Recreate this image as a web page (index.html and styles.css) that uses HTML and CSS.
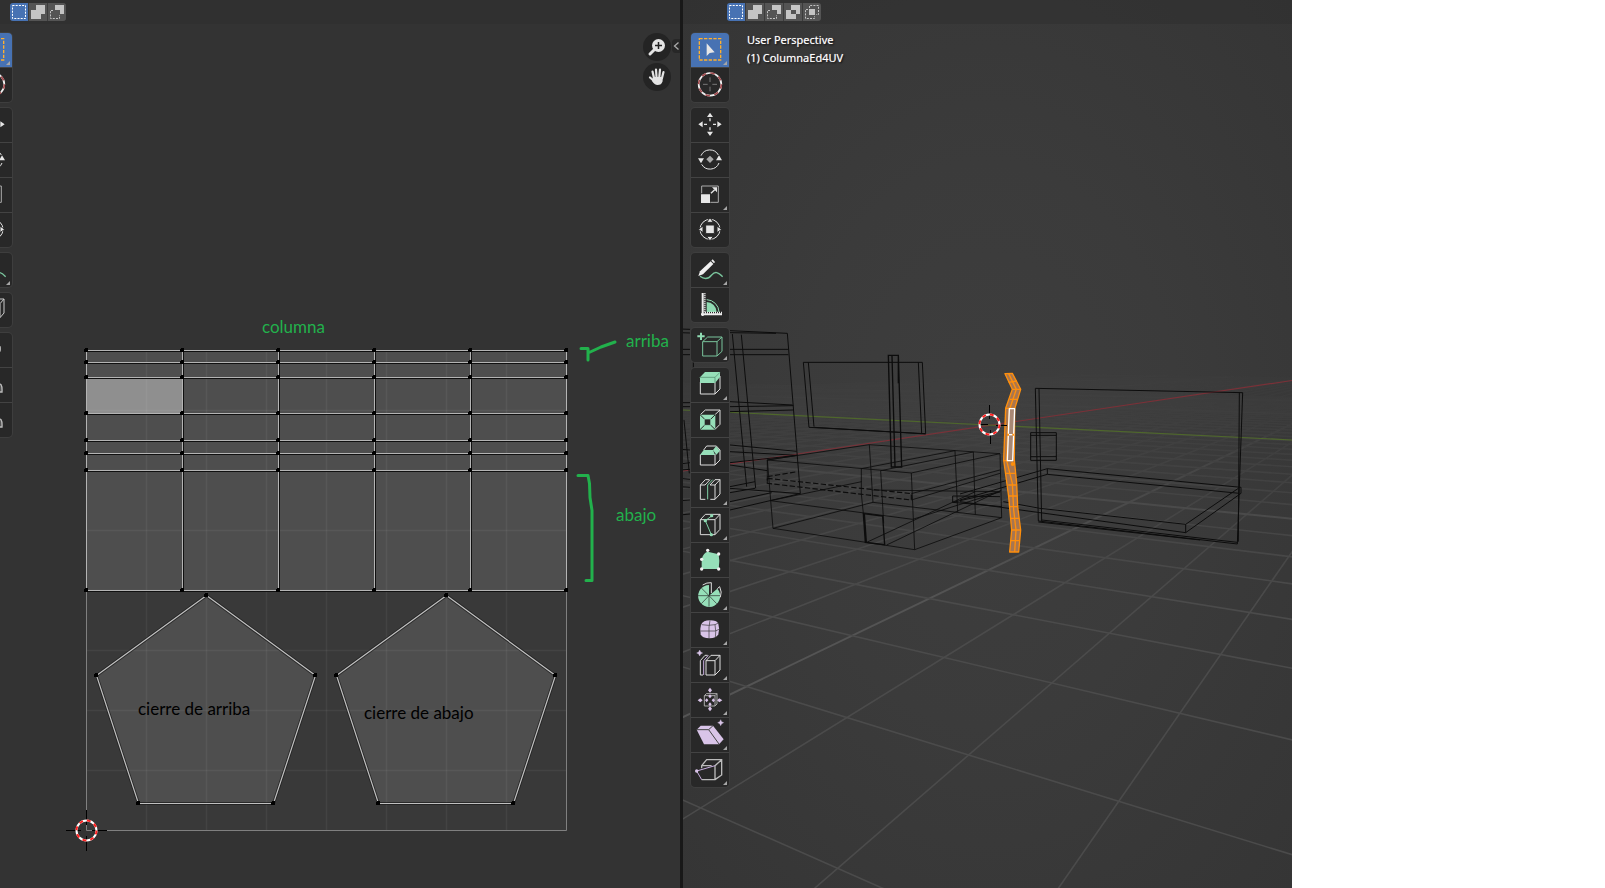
FILE: index.html
```html
<!DOCTYPE html>
<html lang="es">
<head>
<meta charset="utf-8">
<title>ColumnaEd4UV</title>
<link rel="stylesheet" href="styles.css">
</head>
<body>
<svg class="sprite" aria-hidden="true">
  <symbol id="m-set" viewBox="0 0 18 18"><rect x="2.5" y="2.5" width="13" height="13" fill="none" stroke="#fff" stroke-dasharray="2 1.2"/></symbol>
  <symbol id="m-add" viewBox="0 0 18 18"><path d="M7 2h9v9h-4v5H2V7h5z" fill="#c4c4c4"/></symbol>
  <symbol id="m-sub" viewBox="0 0 18 18"><path d="M7 2h9v9h-4V7H7z" fill="#c4c4c4"/><path d="M5 7.500H2.500v8h9V12" fill="none" stroke="#c4c4c4" stroke-dasharray="2 1.200"/></symbol>
  <symbol id="m-inv" viewBox="0 0 18 18"><path fill-rule="evenodd" d="M7 2h9v9h-4v5H2V7h5zM7 7v4h5V7z" fill="#c4c4c4"/></symbol>
  <symbol id="m-int" viewBox="0 0 18 18"><path d="M6 6h6v6H6z" fill="#c4c4c4"/><path d="M6.500 5V2.500h9v9H13M5 6.500H2.500v9h9V13" fill="none" stroke="#c4c4c4" stroke-dasharray="2 1.200"/></symbol>

  <symbol id="t-select" viewBox="0 0 114 102"><rect x="25" y="17" width="64" height="64" fill="none" stroke="#ffb02e" stroke-width="4" stroke-dasharray="10 4"/><path d="M47 31v38l9-9 15-2z" fill="#e6e6e6"/></symbol>
  <symbol id="t-cursor" viewBox="0 0 114 102"><g fill="none" stroke-width="5"><circle cx="57" cy="49" r="34" stroke="#f0f0f0"/><circle cx="57" cy="49" r="34" stroke="#a24a4e" stroke-dasharray="13.350 13.350"/><path d="M36 49h14M64 49h14M57 28v14M57 56v14" stroke="#777" stroke-width="3"/></g></symbol>
  <symbol id="t-move" viewBox="0 0 114 102"><path d="M57 14l9 13H48zM57 84l9-13H48zM22 49l13-9v18zM92 49l-13-9v18z" fill="#e6e6e6"/><path d="M57 31v9M57 58v9M39 49h9M66 49h9" stroke="#e6e6e6" stroke-width="4"/></symbol>
  <symbol id="t-rotate" viewBox="0 0 114 102"><path d="M30 38a29 29 0 0 1 52-2M84 60a29 29 0 0 1-52 4" fill="none" stroke="#e6e6e6" stroke-width="3"/><path d="M21 46h18l-9 15zM75 52h18l-9-15z" fill="#e6e6e6"/><path d="M57 38l11 11-11 11-11-11z" fill="#aaa"/></symbol>
  <symbol id="t-scale" viewBox="0 0 114 102"><path d="M32 46V24h50v49H58" fill="none" stroke="#aaa" stroke-width="3"/><path d="M30 49h27v26H30zM78 28v15L63 28z" fill="#e6e6e6"/><path d="M60 46l11-11" stroke="#e6e6e6" stroke-width="4"/></symbol>
  <symbol id="t-transform" viewBox="0 0 114 102"><circle cx="57" cy="49" r="30" fill="none" stroke="#e6e6e6" stroke-width="3"/><g fill="#e6e6e6" stroke="#282828" stroke-width="3"><path d="M57 14l10 14H47zM57 84l10-14H47zM22 49l14-10v20zM92 49L78 39v20z"/><path d="M44 36h26v26H44z"/></g></symbol>
  <symbol id="t-annotate" viewBox="0 0 114 102"><path d="M27 70c12 9 24 10 35-4 10-12 19-9 33 5" fill="none" stroke="#79c49c" stroke-width="4"/><path d="M22 69l5-14 32-30 8 8-31 31z" fill="#f0f0f0"/><path d="M61 23l4-4 7 8-3 4z" fill="#f0f0f0"/></symbol>
  <symbol id="t-measure" viewBox="0 0 114 102"><path d="M47 72V42a31 31 0 0 1 30 30z" fill="#8fdab2"/><path d="M47 35a38 38 0 0 1 37 37" fill="none" stroke="#8fdab2" stroke-width="3"/><path d="M35 15v69M30 79h63" stroke="#eee" stroke-width="6"/><path d="M41 16v60M42 74h51" stroke="#eee" stroke-width="6" stroke-dasharray="3 3"/></symbol>
  <symbol id="t-addcube" viewBox="0 0 114 102"><g fill="none" stroke="#79c49c" stroke-width="3"><path d="M35 41h43v43H35zM35 41l15-14h43L78 41M93 27v43L78 84"/></g><path d="M30 14v22M19 25h22" stroke="#8fdab2" stroke-width="6"/></symbol>
  <symbol id="t-extrude" viewBox="0 0 114 102"><path d="M28 42v36h44V42M72 78l15-15V24" fill="none" stroke="#ddd" stroke-width="3"/><path d="M27 28l15-16h45v15L72 45H27z" fill="#96dfb9"/><path d="M27 28h45v16M72 28l15-15" fill="none" stroke="#4c8467" stroke-width="2"/></symbol>
  <symbol id="t-inset" viewBox="0 0 114 102"><path d="M28 35l15-14h44L72 35M87 21v43L72 79" fill="none" stroke="#ddd" stroke-width="3"/><path d="M27 35h46v45H27z" fill="#96dfb9"/><path d="M27 35l46 45M73 35L27 80" stroke="#282828" stroke-width="3"/><path d="M40 48h19v19H40z" fill="#282828" stroke="#96dfb9" stroke-width="2"/></symbol>
  <symbol id="t-bevel" viewBox="0 0 114 102"><path d="M28 50v31h44V48M72 81l15-15V36M38 36l9-12h29l11 12" fill="none" stroke="#ddd" stroke-width="3"/><path d="M27 51l11-15h28l6 15zM66 36l9-11 12 13-11 12z" fill="#96dfb9"/></symbol>
  <symbol id="t-loopcut" viewBox="0 0 114 102"><g fill="none" stroke-width="3"><path d="M43 79H28V36h14l15-16M28 36l15-16h12M58 79h14V36H57l15-16h15v43L72 79M72 36l15-16" stroke="#ddd"/><path d="M50 79V36l15-16" stroke="#7fd0a5"/></g></symbol>
  <symbol id="t-knife" viewBox="0 0 114 102"><path d="M28 35h44v45H28zM28 35l15-16h44L72 35M87 19v45L72 80" fill="none" stroke="#ddd" stroke-width="3"/><path d="M62 24L43 38l18 42" fill="none" stroke="#7fd0a5" stroke-width="3"/><g fill="#8fdab2"><circle cx="62" cy="23" r="5"/><circle cx="43" cy="38" r="5"/><circle cx="61" cy="80" r="5"/></g></symbol>
  <symbol id="t-poly" viewBox="0 0 114 102"><path d="M32 48q6-20 18-22l33 8 2 20-2 24H32z" fill="#96dfb9"/><g fill="#f0f0f0"><circle cx="32" cy="49" r="5"/><circle cx="50" cy="22" r="5"/><circle cx="83" cy="33" r="5"/><circle cx="83" cy="78" r="5"/><circle cx="32" cy="78" r="5"/></g></symbol>
  <symbol id="t-spin" viewBox="0 0 114 102"><path d="M54 53V21a33 33 0 1 0 25 11z" fill="#96dfb9"/><path d="M54 53v33M54 53H21M54 53h33M54 53L31 30M54 53L31 77M54 53l23 24" stroke="#282828" stroke-width="2"/><path d="M35 21q12-8 26-7v31M79 32l7-6q8 16 2 32" fill="none" stroke="#ddd" stroke-width="3"/></symbol>
  <symbol id="t-smooth" viewBox="0 0 114 102"><path d="M30 35q6-13 27-13 20 0 25 10 5 16 0 32-6 12-26 12-23 0-27-12-3-16 1-29z" fill="#d9c4e8"/><path d="M29 54h44l11-5M54 76V42l3-20M32 35q20 4 40 0l10-5M73 75q3-20-1-40" fill="none" stroke="#333" stroke-width="2"/></symbol>
  <symbol id="t-slide" viewBox="0 0 114 102"><g fill="none" stroke-width="3"><path d="M36 81h-8V38l14-16h8M45 81h27V38H45zM45 38l15-16h27L72 38M87 22v44L72 81" stroke="#ddd"/><path d="M38 81V38l14-16" stroke="#c9aee0"/></g><path d="M26 6l3 6 6 3-6 3-3 6-3-6-6-3 6-3z" fill="#d9c4e8" stroke="#d9c4e8"/></symbol>
  <symbol id="t-fatten" viewBox="0 0 114 102"><path d="M40 38h32v31H40zM40 38l6-6h32v31l-6 6M72 38l6-6" fill="none" stroke="#aaa" stroke-width="3"/><path d="M57 14l6 8-6 7-6-7zM57 70l6 7-6 8-6-8zM20 52l8-6 7 6-7 6zM78 52l7-6 9 6-9 6z" fill="#d9c4e8"/><path d="M57 34l5 6-5 6-5-6zM57 58l5 6-5 6-5-6zM47 46l5 6-5 6-5-6zM67 46l5 6-5 6-5-6z" fill="#d9c4e8"/></symbol>
  <symbol id="t-shear" viewBox="0 0 114 102"><path d="M17 35l12-12h37l32 41-14 15H39z" fill="#d9c4e8"/><path d="M17 35h36l13-12M53 35l31 43" fill="none" stroke="#444" stroke-width="3"/><path d="M89 5l3 6 6 3-6 3-3 6-3-6-6-3 6-3z" fill="#d9c4e8" stroke="#d9c4e8"/></symbol>
  <symbol id="t-rip" viewBox="0 0 114 102"><path d="M72 38v42H32M32 46v-8l15-18h45v46L72 80M72 38l20-18M32 38h30" fill="none" stroke="#bbb" stroke-width="4"/><path d="M72 38L17 54l15 26" fill="none" stroke="#c9aee0" stroke-width="3"/><circle cx="17" cy="54" r="5" fill="#d9c4e8"/></symbol>
  <symbol id="t-ripuv" viewBox="0 0 114 102"><path d="M64 26l8-8h18v42L78 74M78 32l12-14M78 32v42" fill="none" stroke="#ccc" stroke-width="3"/></symbol>
  <symbol id="t-grab" viewBox="0 0 114 102"><rect x="50" y="36" width="31" height="22" rx="8" fill="#aaa"/></symbol>
  <symbol id="t-relax" viewBox="0 0 114 102"><path d="M60 50q18-4 21 0 4 6 3 22H60z" fill="#555" stroke="#bbb" stroke-width="4"/></symbol>
</svg>

<main class="app">
  <section class="pane pane-uv" aria-label="UV Editor">
    <svg class="canvas" role="img" aria-label="UV layout">
      <rect x="86" y="350" width="480" height="480" fill="#393939"/>
      <rect x="86" y="350" width="480" height="240" fill="#4e4e4e"/>
      <rect x="86" y="377" width="96" height="36" fill="#8f8f8f"/>
      <g fill="#4e4e4e">
        <path d="M206.500 595L315.500 675 274 803.500H138.500L96.500 675z"/>
        <path d="M446.500 595L555.500 675 514 803.500H378.500L336.500 675z"/>
      </g>
      <g id="uv-grid" stroke="#fff" stroke-opacity=".05" stroke-width="1.500"></g>
      <path d="M86.500 590v240.500h480V590" fill="none" stroke="#808080"/>
      <g id="uv-mesh"></g>
      <g class="cursor-mark">
        <path d="M66 830.500h15M92 830.500h15M86.500 810v15M86.500 836v15" stroke="#000"/>
        <circle cx="86.500" cy="830.500" r="10" class="ring-white"/>
        <circle cx="86.500" cy="830.500" r="10" class="ring-red"/>
      </g>
      <g fill="none" stroke="#22b14c" stroke-width="3" stroke-linejoin="round" stroke-linecap="round">
        <path d="M581 348.500h7V360M588 353l13-6 14-5"/>
        <path d="M578 475.500h10l1.500 8 .5 14 2 13v70h-6"/>
      </g>
      <g class="note">
        <text x="262" y="333">columna</text>
        <text x="626" y="347">arriba</text>
        <text x="616" y="521">abajo</text>
      </g>
      <g class="note note-dark">
        <text x="138" y="715">cierre de arriba</text>
        <text x="364" y="719">cierre de abajo</text>
      </g>
    </svg>
    <header class="bar">
      <div class="modes">
        <button class="mode on" aria-label="Set"><svg><use href="#m-set"/></svg></button>
        <button class="mode" aria-label="Extend"><svg><use href="#m-add"/></svg></button>
        <button class="mode" aria-label="Subtract"><svg><use href="#m-sub"/></svg></button>
      </div>
    </header>
    <div class="body">
      <nav class="tools tools-cut" aria-label="UV tools">
        <div class="group">
          <button class="tool on more" aria-label="Select Box"><svg><use href="#t-select"/></svg></button>
          <button class="tool" aria-label="Cursor"><svg><use href="#t-cursor"/></svg></button>
        </div>
        <div class="group">
          <button class="tool" aria-label="Move"><svg><use href="#t-move"/></svg></button>
          <button class="tool" aria-label="Rotate"><svg><use href="#t-rotate"/></svg></button>
          <button class="tool" aria-label="Scale"><svg><use href="#t-scale"/></svg></button>
          <button class="tool" aria-label="Transform"><svg><use href="#t-transform"/></svg></button>
        </div>
        <div class="group">
          <button class="tool more" aria-label="Annotate"><svg><use href="#t-annotate"/></svg></button>
        </div>
        <div class="group">
          <button class="tool" aria-label="Rip Region"><svg><use href="#t-ripuv"/></svg></button>
        </div>
        <div class="group">
          <button class="tool" aria-label="Grab"><svg><use href="#t-grab"/></svg></button>
          <button class="tool" aria-label="Relax"><svg><use href="#t-relax"/></svg></button>
          <button class="tool" aria-label="Pinch"><svg><use href="#t-relax"/></svg></button>
        </div>
      </nav>
      <div class="gizmos">
        <button class="gizmo" aria-label="Zoom"><svg viewBox="0 0 28 28"><circle cx="15.500" cy="12.500" r="6.500" fill="#e4e4e4"/><path d="M11 17l-4 4" stroke="#e4e4e4" stroke-width="3" stroke-linecap="round"/><path d="M15.500 9v7M12 12.500h7" stroke="#222" stroke-width="1.500"/></svg></button>
        <button class="gizmo" aria-label="Pan"><svg viewBox="0 0 28 28"><g stroke="#e4e4e4" stroke-width="2.200" stroke-linecap="round" fill="none"><path d="M11 15L9.500 8.500M13.500 14L13 6.500M16.300 14l.7-7.300M19 15l1.500-6M11 18l-4-3.500"/></g><path d="M10 14h10l-.5 4.500q-1 3.500-5 3.500-3 0-5.500-4z" fill="#e4e4e4"/></svg></button>
      </div>
      <button class="side-tab" aria-label="Sidebar"><svg viewBox="0 0 8 14"><path d="M6.500 3.500l-4 3.500 4 3.500" fill="none" stroke="#aaa" stroke-width="1.300"/></svg></button>
    </div>
  </section>

  <section class="pane pane-3d" aria-label="3D Viewport">
    <svg class="canvas" role="img" aria-label="Wireframe scene">
      <defs>
        <linearGradient id="fade" gradientUnits="userSpaceOnUse" x1="0" y1="350" x2="0" y2="600">
          <stop offset="0" stop-color="#fff" stop-opacity="0"/><stop offset=".25" stop-color="#fff" stop-opacity=".2"/><stop offset=".6" stop-color="#fff" stop-opacity=".6"/><stop offset="1" stop-color="#fff"/>
        </linearGradient>
        <mask id="far" maskUnits="userSpaceOnUse" x="683" y="340" width="2000" height="3000"><rect x="683" y="340" width="2000" height="3000" fill="url(#fade)"/></mask>
      </defs>
      <g transform="translate(-683 0)">
        <g mask="url(#far)"><g id="floor" fill="none"></g></g>
        <path d="M683 471L1292 380.500" stroke="#7a3138" stroke-width="1.200"/>
        <path d="M683 410L1292 440" stroke="#4f682b" stroke-width="1.200"/>
        <g transform="translate(680 310) scale(.33333)" fill="none" stroke="#0c0c0c" stroke-width="3">
          <path d="M0 57L30 58M150 62L322 70 361 551 150 535M0 68L30 69M150 68L288 70M0 118L30 118M150 118L325 118M0 134L325 134M157 72L200 530M184 74L227 535M150 275L338 285M0 278L30 278M150 290L340 287M150 305L340 300M0 290L30 290M40 155V175M12 330L28 490M150 405L350 424M0 418L30 420M150 425L352 436M0 462L30 458M150 458L350 436M0 480L30 478M150 465L262 482M0 505L30 508M150 530L225 515M150 548L225 535M150 600L360 551M0 530L30 532M0 572L30 570M0 615L30 612M150 575L275 548"/>
          <path d="M370 157H727L737 371 387 352zM385 157L402 350M715 157L725 370M403 352L737 372"/>
          <path d="M625 136H655L665 471H634zM636 138L645 470M655 138V220" stroke-width="4"/>
          <path d="M262 450L568 404 960 431 694 489zM262 450L279 655 704 719 965 623 960 431M694 489L704 719M568 404L579 577M579 577L279 655M579 577L965 623M271 572L698 628 962 545M271 572L545 515M825 422L833 606M880 426L886 613M544 476V552L550 610M602 482L611 640M620 705L965 540M560 697L886 545M262 450V520M352 436L262 450M544 476L825 422M602 482L880 426M694 570L960 490M694 551L960 480M575 540L960 545" stroke-width="2.500"/>
          <path d="M262 500L352 485M262 505L694 551V570L262 520z" stroke-width="3.500" stroke-dasharray="16 7"/>
          <path d="M550 611L608 618 614 704 556 697zM553 611L559 697" stroke-width="4"/>
          <path d="M830 558H818V577L965 590M818 577L960 545M830 558L960 560"/>
        </g>
        <g transform="translate(960 350) scale(.33333)" fill="none" stroke="#0c0c0c" stroke-width="3">
          <path d="M226 115L848 128 832 582 235 513zM237 116L245 513M838 128L835 575M245 510L832 577M235 516L720 570"/>
          <path d="M212 248H289V331H212zM212 256H289M212 320H289"/>
          <path d="M262 356L843 412V430L677 548 0 455M262 356V373L838 430M835 415L677 523V548M262 373L0 450M262 356L0 432M677 523L240 475M130 455L240 475"/>
        </g>
        <g transform="translate(960 350) scale(.33333)" stroke-linejoin="round">
          <path d="M135 71L157 70 182 118 164 177 163 330 170 400 173 470 182 540 176 606H149L155 540 146 440 131 330 137 175 157 118z" fill="#a87650" stroke="#ff8f0c" stroke-width="4"/>
          <path d="M146 71L169 118 149 177 143 255 140 332 157 400 161 480 168 540 164 606" fill="none" stroke="#ff8f0c" stroke-width="4"/>
          <path d="M146 97L170 93M157 118H182M150 148H174M137 175H164M131 332H160M138 370H166M145 405H169M147 438H172M150 470H173M153 505H178M155 540H182M152 572H178" fill="none" stroke="#ff8f0c" stroke-width="4"/>
          <circle cx="158" cy="342" r="6" fill="#ff8f0c"/>
          <path d="M148 176H164L158 332H142z" fill="#a88874" stroke="#fff" stroke-width="4"/>
          <path d="M145 254h18" stroke="#fff" stroke-width="4"/>
          <path d="M141 254h6M157 254h6" stroke="#ff8f0c" stroke-width="6"/>
        </g>
        <g class="cursor-mark">
          <path d="M979 424.500h9M996 425.500h11M989.500 405v14M990.500 430v14" stroke="#000"/>
          <circle cx="989.500" cy="424.500" r="10" class="ring-white"/>
          <circle cx="989.500" cy="424.500" r="10" class="ring-red"/>
        </g>
      </g>
    </svg>
    <header class="bar">
      <div class="modes">
        <button class="mode on" aria-label="Set"><svg><use href="#m-set"/></svg></button>
        <button class="mode" aria-label="Extend"><svg><use href="#m-add"/></svg></button>
        <button class="mode" aria-label="Subtract"><svg><use href="#m-sub"/></svg></button>
        <button class="mode" aria-label="Invert"><svg><use href="#m-inv"/></svg></button>
        <button class="mode" aria-label="Intersect"><svg><use href="#m-int"/></svg></button>
      </div>
    </header>
    <div class="body">
      <nav class="tools" aria-label="Mesh tools">
        <div class="group">
          <button class="tool on more" aria-label="Select Box"><svg><use href="#t-select"/></svg></button>
          <button class="tool" aria-label="Cursor"><svg><use href="#t-cursor"/></svg></button>
        </div>
        <div class="group">
          <button class="tool" aria-label="Move"><svg><use href="#t-move"/></svg></button>
          <button class="tool" aria-label="Rotate"><svg><use href="#t-rotate"/></svg></button>
          <button class="tool more" aria-label="Scale"><svg><use href="#t-scale"/></svg></button>
          <button class="tool" aria-label="Transform"><svg><use href="#t-transform"/></svg></button>
        </div>
        <div class="group">
          <button class="tool more" aria-label="Annotate"><svg><use href="#t-annotate"/></svg></button>
          <button class="tool" aria-label="Measure"><svg><use href="#t-measure"/></svg></button>
        </div>
        <div class="group">
          <button class="tool more" aria-label="Add Cube"><svg><use href="#t-addcube"/></svg></button>
        </div>
        <div class="group">
          <button class="tool more" aria-label="Extrude Region"><svg><use href="#t-extrude"/></svg></button>
          <button class="tool" aria-label="Inset Faces"><svg><use href="#t-inset"/></svg></button>
          <button class="tool" aria-label="Bevel"><svg><use href="#t-bevel"/></svg></button>
          <button class="tool more" aria-label="Loop Cut"><svg><use href="#t-loopcut"/></svg></button>
          <button class="tool more" aria-label="Knife"><svg><use href="#t-knife"/></svg></button>
          <button class="tool" aria-label="Poly Build"><svg><use href="#t-poly"/></svg></button>
          <button class="tool more" aria-label="Spin"><svg><use href="#t-spin"/></svg></button>
          <button class="tool more" aria-label="Smooth"><svg><use href="#t-smooth"/></svg></button>
          <button class="tool more" aria-label="Edge Slide"><svg><use href="#t-slide"/></svg></button>
          <button class="tool more" aria-label="Shrink/Fatten"><svg><use href="#t-fatten"/></svg></button>
          <button class="tool more" aria-label="Shear"><svg><use href="#t-shear"/></svg></button>
          <button class="tool more" aria-label="Rip Region"><svg><use href="#t-rip"/></svg></button>
        </div>
      </nav>
      <div class="info">
        <p>User Perspective</p>
        <p>(1) ColumnaEd4UV</p>
      </div>
    </div>
  </section>
</main>
<script src="scene.js"></script>
</body>
</html>
```
FILE: styles.css
```css
* { box-sizing: border-box; }

body {
  margin: 0;
  background: #fff;
  font-family: "Noto Sans", "Open Sans", sans-serif;
  font-size: 11px;
}

button { margin: 0; padding: 0; border: 0; background: none; }
button svg { display: block; width: 100%; height: 100%; }

.sprite { position: absolute; width: 0; height: 0; }

.app {
  display: flex;
  gap: 3px;
  width: 80.5%;
  min-height: 100vh;
  background: #181818;
}

.pane {
  position: relative;
  display: flex;
  flex-direction: column;
  min-width: 0;
  overflow: hidden;
}
.pane-uv { flex: 680 1 0; background: #333; }
.pane-3d {
  flex: 609 1 0;
  background: radial-gradient(ellipse at 50% 50%, #3e3e3e 0%, #3b3b3b 45%, #353535 100%);
}

.canvas { position: absolute; inset: 0; width: 100%; height: 100%; }

.bar {
  position: relative;
  display: flex;
  height: 24px;
  padding: 3px 10px;
  background: rgba(46, 46, 46, .5);
}
.pane-3d .bar { padding-left: 44px; }

.modes {
  display: flex;
  gap: 1px;
  height: 18px;
  border-radius: 3px;
  overflow: hidden;
  background: #3c3c3c;
}
.mode { width: 18px; height: 18px; background: #545454; }
.mode.on { background: #4772b3; }

.body { position: relative; display: flex; align-items: flex-start; padding-top: 9px; }

.tools { display: flex; flex-direction: column; gap: 6px; width: 38px; margin-left: 8px; }
.tools-cut { margin-left: -26px; }
.group {
  display: flex;
  flex-direction: column;
  gap: 1px;
  border-radius: 4px;
  overflow: hidden;
  background: #434343;
  box-shadow: 0 0 0 1px #3e3e3e;
}
.tool { position: relative; width: 38px; height: 34px; background: #282828; }
.tool.on { background: #4772b3; }
.more::after {
  content: "";
  position: absolute;
  right: 2px;
  bottom: 2px;
  border: 2px solid transparent;
  border-right-color: #a6a6a6;
  border-bottom-color: #a6a6a6;
}

.gizmos { display: flex; flex-direction: column; gap: 2px; margin-left: auto; }
.gizmo { width: 28px; height: 28px; border-radius: 50%; background: #242424; }
.side-tab {
  width: 8px;
  height: 14px;
  margin: 6px 0 0 1px;
  border-radius: 4px 0 0 4px;
  background: #272727;
}

.info {
  margin: -2px 0 0 18px;
  color: #fff;
  line-height: 18px;
  text-shadow: 0 0 1px rgba(255, 255, 255, .6), 1px 1px 2px #000;
}
.info p { margin: 0; }

.note { font-family: Lato, sans-serif; font-size: 17px; fill: #22b14c; }
.note-dark { fill: #000; }

.cursor-mark { fill: none; }
.ring-white { stroke: #fff; stroke-width: 2px; }
.ring-red { stroke: #f22; stroke-width: 2px; stroke-dasharray: 3.93 3.93; }
```
FILE: scene.js
```js
const NS = "http://www.w3.org/2000/svg";

function path(parent, d, attrs) {
  const p = document.createElementNS(NS, "path");
  p.setAttribute("d", d);
  for (const k in attrs) p.setAttribute(k, attrs[k]);
  parent.appendChild(p);
}

/* Floor grid, projected from plane cells (i, j). */
const project = (i, j) => {
  const w = 1 - 0.1048 * i + 0.2229 * j;
  return [(968.6 + 32.9 * i + 317.7 * j) / w, (755 - 37.7 * i + 80.2 * j) / w].map(v => v.toFixed(1));
};
const floor = document.getElementById("floor");
const style = major => ({ "stroke-width": major ? 2 : 1.6, stroke: major ? "#545454" : "#4b4b4b" });
for (let i = -50; i <= 28; i++) {
  const start = (0.15 - 1 + 0.1048 * i) / 0.2229;
  path(floor, `M${project(i, start)}L${project(i, 90)}`, style((i + 2) % 10 === 0));
}
for (let j = -3; j <= 40; j++) {
  const end = (1 + 0.2229 * j - 0.15) / 0.1048;
  path(floor, `M${project(-150, j)}L${project(end, j)}`, style((j - 7) % 10 === 0));
}

/* UV background subdivisions. */
const grid = document.getElementById("uv-grid");
for (let k = 1; k < 8; k++) {
  path(grid, `M${86.5 + 60 * k} 350V830`);
  path(grid, `M86 ${350.5 + 60 * k}H566`);
}

/* UV islands: column strip and both caps. */
const mesh = document.getElementById("uv-mesh");
const xs = [86, 182, 278, 374, 470, 566];
const ys = [350, 362, 377, 413, 440, 453, 470, 590];
const caps = [206, 446].map(x => [[x, 595], [x + 109, 675], [x + 67, 803], [x - 68, 803], [x - 110, 675]]);
let light = "";
let dark = "";
let dots = "";
const dot = (x, y) => { dots += `M${x - 1} ${y - 2}h3v4h-3zM${x - 2} ${y - 1}h4v3h-4z`; };
xs.forEach(x => {
  light += `M${x + 0.5} 350V590`;
  if (x > 86 && x < 566) dark += `M${x + 1.5} 350V590`;
});
ys.forEach(y => {
  light += `M86 ${y + 0.5}H566`;
  dark += `M86 ${y + 1.5}H566`;
  xs.forEach(x => dot(x, y));
});
let capLines = "";
caps.forEach(c => {
  capLines += "M" + c.map(p => [p[0] + 0.5, p[1] + 0.5].join(" ")).join("L") + "Z";
  c.forEach(p => dot(p[0], p[1]));
});
path(mesh, capLines, { fill: "none", stroke: "#1a1a1a", "stroke-width": 3, "stroke-opacity": 0.7 });
path(mesh, capLines, { fill: "none", stroke: "#c0c0c0", "stroke-width": 1.2 });
path(mesh, dark, { fill: "none", stroke: "#101010" });
path(mesh, light, { fill: "none", stroke: "#b4b4b4" });
path(mesh, dots, { fill: "#000" });
```
